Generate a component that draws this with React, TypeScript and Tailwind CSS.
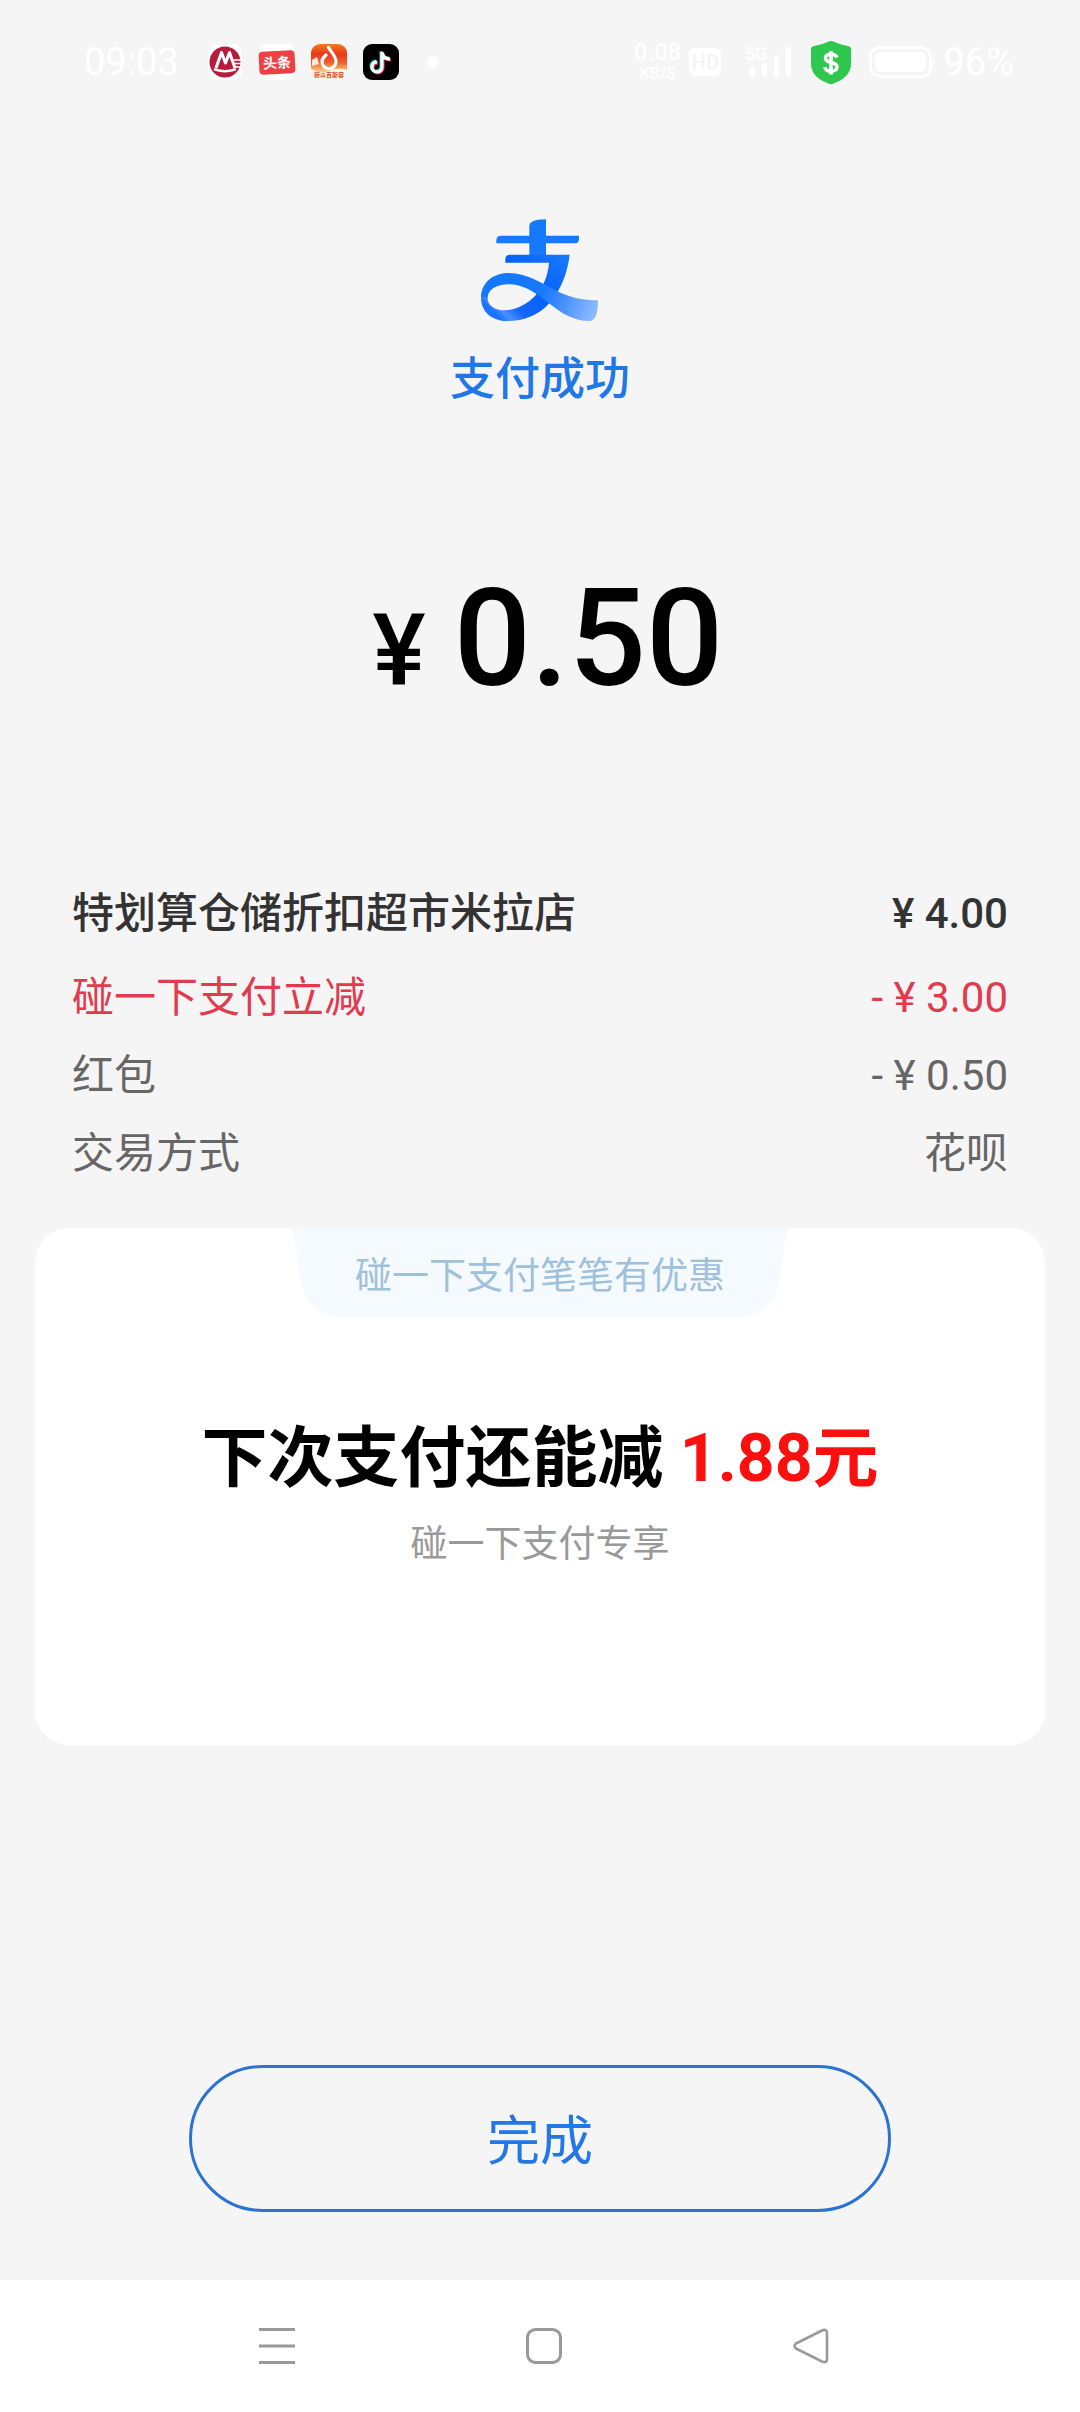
import React from 'react'

const rows = [
  { label: '特划算仓储折扣超市米拉店', value: '¥ 4.00', style: 'mb-6 font-medium text-[#333333]' },
  { label: '碰一下支付立减', value: '- ¥ 3.00', style: 'mb-[18px] text-[#e23a4e]' },
  { label: '红包', value: '- ¥ 0.50', style: 'mb-[18px] text-[#666666]' },
  { label: '交易方式', value: '花呗', style: 'text-[#666666]' },
]

function AppIcons() {
  return (
    <div className="flex items-center gap-4">
      {/* bank */}
      <svg className="size-9" viewBox="0 0 36 36" aria-hidden="true">
        <rect x="1" width="34" height="36" rx="9" fill="#fff" />
        <circle cx="18" cy="18" r="15.500" fill="#b81c3c" />
        <path d="M9 24 14.500 8.500 18.500 19 22.500 8.500 28 24" fill="none" stroke="#fff" strokeWidth="3" strokeLinejoin="round" />
        <path d="M8 25.500q10 3.500 20 0" fill="none" stroke="#fff" strokeWidth="2.400" strokeLinecap="round" />
        <path d="M27 16h7M28 19.500h6M29 23h5" stroke="#fff" strokeWidth="1.400" />
      </svg>
      <div className="flex size-9 items-center justify-center rounded-lg bg-white">
        <span className="flex h-[23px] w-9 -rotate-3 items-center justify-center rounded-sm bg-[#ee4146] text-[14px] leading-none font-bold text-white">
          头条
        </span>
      </div>
      {/* live stream */}
      <svg className="size-9" viewBox="0 0 36 36" aria-hidden="true">
        <defs>
          <linearGradient id="live" x1="0" y1="0" x2="0" y2="1">
            <stop offset="0" stopColor="#f47a1c" />
            <stop offset="0.350" stopColor="#ea3a1c" />
            <stop offset="0.650" stopColor="#f0602c" />
            <stop offset="1" stopColor="#f6dc8c" />
          </linearGradient>
        </defs>
        <rect width="36" height="36" rx="9" fill="#fdf6e6" />
        <path d="M0 9a9 9 0 0 1 9-9h18a9 9 0 0 1 9 9v17q-9-3-18 1T0 25z" fill="url(#live)" />
        <path d="M1 16l5-3 2 7-7 2z" fill="#fde9dc" />
        <path d="M17.500 3.500c2 4 8 9 7.500 14.500a7 7 0 0 1-14-.5c0-3 2-4.500 4-6.500" fill="none" stroke="#fff" strokeWidth="3.200" strokeLinecap="round" />
        <text x="18" y="33" textAnchor="middle" fontSize="6" fontWeight="700" fill="#d8501e">新斗百斯容</text>
      </svg>
      {/* short video */}
      <svg className="size-9" viewBox="0 0 36 36" aria-hidden="true">
        <rect width="36" height="36" rx="9" fill="#000" />
        <g fill="none" strokeWidth="3.200">
          <path d="M19 8v15a5 5 0 1 1-5-5M19 8.500c.5 4 3.500 6.500 8 6.700" transform="translate(-.8 -.8)" stroke="#25f4ee" />
          <path d="M19 8v15a5 5 0 1 1-5-5M19 8.500c.5 4 3.500 6.500 8 6.700" transform="translate(1 .8)" stroke="#fe2c55" />
          <path d="M19 8v15a5 5 0 1 1-5-5M19 8.500c.5 4 3.500 6.500 8 6.700" stroke="#fff" />
        </g>
      </svg>
    </div>
  )
}

function StatusBar() {
  return (
    <header className="flex h-[124px] items-center justify-between pr-[66px] pl-[84px] text-white">
      <div className="flex items-center">
        <time className="mr-7 text-[38px] leading-none">09:03</time>
        <AppIcons />
        <span className="ml-7 size-3 rounded-full bg-white" />
      </div>
      <div className="flex items-center">
        <div className="flex flex-col items-center font-medium">
          <span className="text-[24px] leading-[24px]">0.08</span>
          <span className="text-[16px] leading-[20px]">KB/S</span>
        </div>
        <span className="ml-2 flex h-7 w-8 items-center justify-center rounded-md bg-white text-[20px] leading-none font-medium text-[#f4f4f4]">
          HD
        </span>
        <svg className="ml-6 h-11 w-12" viewBox="0 -6 48 44" fill="#fff" aria-hidden="true">
          <text x="0" y="14" fontSize="18" fontWeight="500">5G</text>
          <path d="M5 21h5v10H5zM17 17h5v14h-5zM29 9h5v22h-5zM41 1h5v30h-5z" />
        </svg>
        <svg className="ml-[18px] h-[43px] w-10" viewBox="0 0 40 43" aria-hidden="true">
          <path d="M20 0q2 0 3 .8Q29 4 37 5q3 .5 3 3v15c0 10-8 16-17.500 19.500q-2.500 1-5 0C8 39 0 33 0 23V8q0-2.500 3-3 8-1 14-4.200Q18 0 20 0z" fill="#2fc84e" />
          <path d="M26 16.500c-1-2.300-3.200-3.200-6-3.200-3.300 0-5.500 1.500-5.500 4 0 5.800 11.500 2.700 11.500 8.600 0 2.700-2.500 4.300-6 4.300-3.200 0-5.500-1.400-6.300-4M20 10v23.500" fill="none" stroke="#fff" strokeWidth="3.600" />
        </svg>
        <svg className="ml-[18px] h-8 w-[68px]" viewBox="0 0 68 32" aria-hidden="true">
          <rect x="1.500" y="1.500" width="60" height="29" rx="9" fill="none" stroke="#fff" strokeWidth="3" />
          <rect x="6" y="6" width="51" height="20" rx="5" fill="#fff" />
          <path d="M64 11q3 5 0 10z" fill="#fff" />
        </svg>
        <span className="ml-[6px] text-[38px] leading-none">96%</span>
      </div>
    </header>
  )
}

function PayLogo() {
  return (
    <svg className="h-[103px] w-[119px]" viewBox="152 56 357 309" role="img" aria-label="支付宝">
      <defs>
        <linearGradient id="leg" gradientUnits="userSpaceOnUse" x1="400" y1="170" x2="220" y2="362">
          <stop offset="0" stopColor="#1677ff" />
          <stop offset="0.500" stopColor="#0560fb" />
          <stop offset="0.800" stopColor="#1668fb" />
          <stop offset="0.930" stopColor="#4a90ff" />
          <stop offset="1" stopColor="#1b74ff" />
        </linearGradient>
        <linearGradient id="ribbon" gradientUnits="userSpaceOnUse" x1="330" y1="270" x2="500" y2="330">
          <stop offset="0" stopColor="#1677ff" />
          <stop offset="0.350" stopColor="#3c8bfc" />
          <stop offset="1" stopColor="#8fbcff" />
        </linearGradient>
      </defs>
      <path d="M297 187V76q0-8 8-12 16-7 42-7v120z" fill="#1677ff" />
      <path d="M198 129v-9q0-14 14-14h234v9q0 14-14 14z" fill="#1677ff" />
      <path d="M152 292C152 332 182 362 232 362C280 362 325 345 358 307C392 268 412 215 418 163H239q-14 0-14 14v10H356C350 270 290 326 225 330C195 330 172 318 172 293z" fill="url(#leg)" />
      <path d="M152 292C152 250 185 218 235 218C290 218 335 250 385 275C425 293 460 300 503 300C503 330 499 362 478 362C430 362 395 340 355 308C310 272 275 252 235 252C198 252 172 268 172 293z" fill="url(#ribbon)" />
    </svg>
  )
}

function PromoCard() {
  return (
    <section className="mx-[35px] mt-11 flex flex-col items-center rounded-[34px] bg-white pb-[174px]">
      <div className="relative flex h-[89px] w-[496px] items-center justify-center pt-2">
        <svg className="absolute inset-0 size-full" viewBox="0 0 496 89" preserveAspectRatio="none" aria-hidden="true">
          <path d="M0 0h496c-4 12-4 30-9 52-4 24-18 37-40 37H49C27 89 13 76 9 52 4 30 4 12 0 0z" fill="#f5faff" />
        </svg>
        <p className="relative text-[37px] leading-[52px] text-[#9fc1dc]">碰一下支付笔笔有优惠</p>
      </div>
      <h2 className="mt-[102px] text-[66px] leading-[80px] font-bold text-black">
        下次支付还能减 <strong className="font-bold text-[#fb0f0f]">1.88元</strong>
      </h2>
      <p className="mt-5 text-[37px] leading-[52px] text-[#999999]">碰一下支付专享</p>
    </section>
  )
}

function NavBar() {
  return (
    <nav className="flex h-[132px] items-center justify-between bg-white pr-62 pl-64 text-[#999999]">
      <button type="button" aria-label="菜单" className="flex w-[42px] justify-center">
        <svg className="size-9" viewBox="0 0 36 36" stroke="currentColor" strokeWidth="3">
          <path d="M0 1.500h36M0 18h36M0 34.500h36" />
        </svg>
      </button>
      <button type="button" aria-label="主页" className="flex w-[42px] justify-center">
        <svg className="size-9" viewBox="0 0 36 36" fill="none" stroke="currentColor" strokeWidth="3">
          <rect x="1.500" y="1.500" width="33" height="33" rx="8" />
        </svg>
      </button>
      <button type="button" aria-label="返回" className="flex w-[42px] justify-center">
        <svg className="size-9" viewBox="0 0 36 36" fill="none" stroke="currentColor" strokeWidth="2.600" strokeLinejoin="round">
          <path d="M3 15.500 29 2.500q5-2 5 2.500v26q0 4.500-5 2.500L3 20.500q-3-2.500 0-5z" />
        </svg>
      </button>
    </nav>
  )
}

function App() {
  return (
    <div className="flex min-h-screen flex-col bg-[#f5f5f5] font-[Roboto,'Noto_Sans_CJK_SC',sans-serif]" lang="zh-CN">
      <StatusBar />
      <main className="flex flex-1 flex-col">
        <div className="mt-[95px] flex flex-col items-center">
          <PayLogo />
          <h1 className="mt-7 text-[45px] leading-[60px] font-medium text-[#1f77e8]">支付成功</h1>
        </div>
        <p className="mt-[149px] flex items-baseline justify-center gap-7 pl-4 leading-[160px] font-medium text-black">
          <span className="text-[100px]">¥</span>
          <span className="text-[136px]">0.50</span>
        </p>
        <dl className="mt-[153px] px-[72px] text-[42px] leading-[60px]">
          {rows.map((row) => (
            <div key={row.label} className={`flex justify-between ${row.style}`}>
              <dt>{row.label}</dt>
              <dd>{row.value}</dd>
            </div>
          ))}
        </dl>
        <PromoCard />
        <button
          type="button"
          className="mx-[189px] mt-auto mb-[68px] h-[147px] rounded-full border-3 border-[#2b74d2] pt-2 text-[53px] text-[#2377e6]"
        >
          完成
        </button>
      </main>
      <NavBar />
    </div>
  )
}

export default App
